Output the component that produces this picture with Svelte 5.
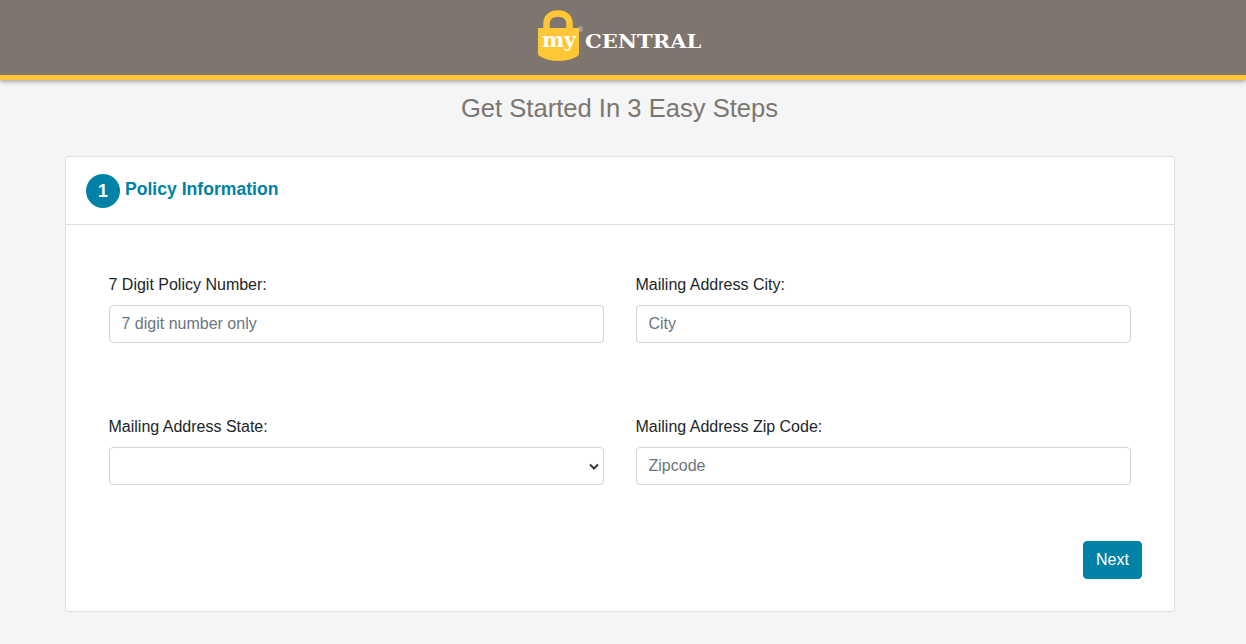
<script>
  const fields = [
    { label: '7 Digit Policy Number:', placeholder: '7 digit number only' },
    { label: 'Mailing Address City:', placeholder: 'City' },
    { label: 'Mailing Address State:', options: true },
    { label: 'Mailing Address Zip Code:', placeholder: 'Zipcode' }
  ];
</script>

<header class="topbar">
  <div class="logo">
    <div class="lock">
      <svg width="42" height="52" viewBox="0 0 42 52">
        <path d="M8.500 22V14C8.500 7 13 3.500 20 3.500s11.500 3.500 11.500 10.500v8" fill="none" stroke="#ffc735" stroke-width="6.500" />
        <path d="M0 18H41V43C41 45 40 46 38 47C33 49.800 27 51 20.500 51S8 49.800 3 47C1 46 0 45 0 43Z" fill="#ffc735" />
      </svg>
      <span class="my">my</span>
      <span class="reg">®</span>
    </div>
    <span class="central">CENTRAL</span>
  </div>
</header>

<h1>Get Started In 3 Easy Steps</h1>

<section class="card">
  <div class="card-head">
    <span class="step">1</span>
    <h2>Policy Information</h2>
  </div>
  <form class="card-body">
    <div class="grid">
      {#each fields as field}
        <label>
          <span>{field.label}</span>
          {#if field.options}
            <select></select>
          {:else}
            <input type="text" placeholder={field.placeholder} />
          {/if}
        </label>
      {/each}
    </div>
    <div class="actions">
      <button type="button">Next</button>
    </div>
  </form>
</section>

<style>
  :global(body) {
    background: #f4f5f7;
    font-family: "Liberation Sans", Arial, sans-serif;
    font-size: 16px;
    line-height: 1.5;
    color: #212529;
  }

  .topbar {
    height: 75px;
    background: #7d756e;
    border-bottom: 5px solid #ffc735;
    box-shadow: 0 2px 4px rgba(0, 0, 0, 0.3);
    display: flex;
    justify-content: center;
  }

  .logo {
    display: flex;
    align-items: flex-start;
    width: 164px;
    margin-right: 6px;
    padding-top: 10px;
    height: 65px;
  }

  .lock {
    position: relative;
    width: 47px;
    height: 52px;
    flex: none;
  }

  .lock svg {
    display: block;
  }

  .my {
    position: absolute;
    left: 4px;
    top: 18px;
    font-family: "DejaVu Serif", serif;
    font-weight: 700;
    font-size: 21px;
    line-height: 24px;
    letter-spacing: -0.5px;
    color: #fff;
  }

  .reg {
    position: absolute;
    left: 40px;
    top: 16px;
    font-size: 7px;
    line-height: 8px;
    color: #ddd;
  }

  .central {
    margin-top: 22px;
    font-family: "DejaVu Serif", serif;
    font-weight: 700;
    font-size: 18px;
    line-height: 20px;
    color: #fff;
    transform: scaleX(1.17);
    transform-origin: left center;
  }

  h1 {
    margin: 13px 0 33px -7px;
    text-align: center;
    font-size: 25.6px;
    font-weight: 400;
    line-height: 30px;
    color: #7e756d;
  }

  .card {
    width: 1110px;
    box-sizing: border-box;
    margin: 0 auto 0 65px;
    height: 456px;
    background: #fff;
    border: 1px solid #dfe0e2;
    border-radius: 4px;
  }

  .card-head {
    display: flex;
    align-items: center;
    gap: 5px;
    height: 67px;
    padding-left: 20px;
    border-bottom: 1px solid #dfe0e2;
  }

  .step {
    width: 34px;
    height: 34px;
    border-radius: 50%;
    background: #0082a6;
    color: #fff;
    font-weight: 700;
    font-size: 17.6px;
    line-height: 34px;
    text-align: center;
  }

  h2 {
    margin: 0 0 4px;
    font-size: 17.6px;
    font-weight: 700;
    line-height: 24px;
    color: #0082a6;
  }

  .card-body {
    padding: 48px 43px 32px;
  }

  .grid {
    display: grid;
    grid-template-columns: 495px 495px;
    column-gap: 32px;
    row-gap: 72px;
  }

  label {
    display: block;
  }

  label span {
    display: block;
    margin-bottom: 8px;
    text-indent: -0.5px;
  }

  input,
  select {
    display: block;
    box-sizing: border-box;
    width: 100%;
    height: 38px;
    padding: 6px 11.5px;
    font: inherit;
    color: #495057;
    background-color: #fff;
    border: 1px solid #ced4da;
    border-radius: 4px;
  }

  select {
    appearance: none;
    background-image: url("data:image/svg+xml,%3Csvg xmlns='http://www.w3.org/2000/svg' width='10' height='7' viewBox='0 0 10 7'%3E%3Cpath d='M1 1.500l4 4 4-4' fill='none' stroke='%23343a40' stroke-width='2'/%3E%3C/svg%3E");
    background-repeat: no-repeat;
    background-position: right 4px center;
  }

  input::placeholder {
    color: #6c757d;
    opacity: 1;
  }

  .actions {
    display: flex;
    justify-content: flex-end;
    margin-top: 56px;
    margin-right: -11px;
  }

  button {
    width: 59px;
    height: 38px;
    padding: 0;
    font: inherit;
    color: #fff;
    background: #0082a6;
    border: 1px solid #0082a6;
    border-radius: 4px;
  }
</style>
